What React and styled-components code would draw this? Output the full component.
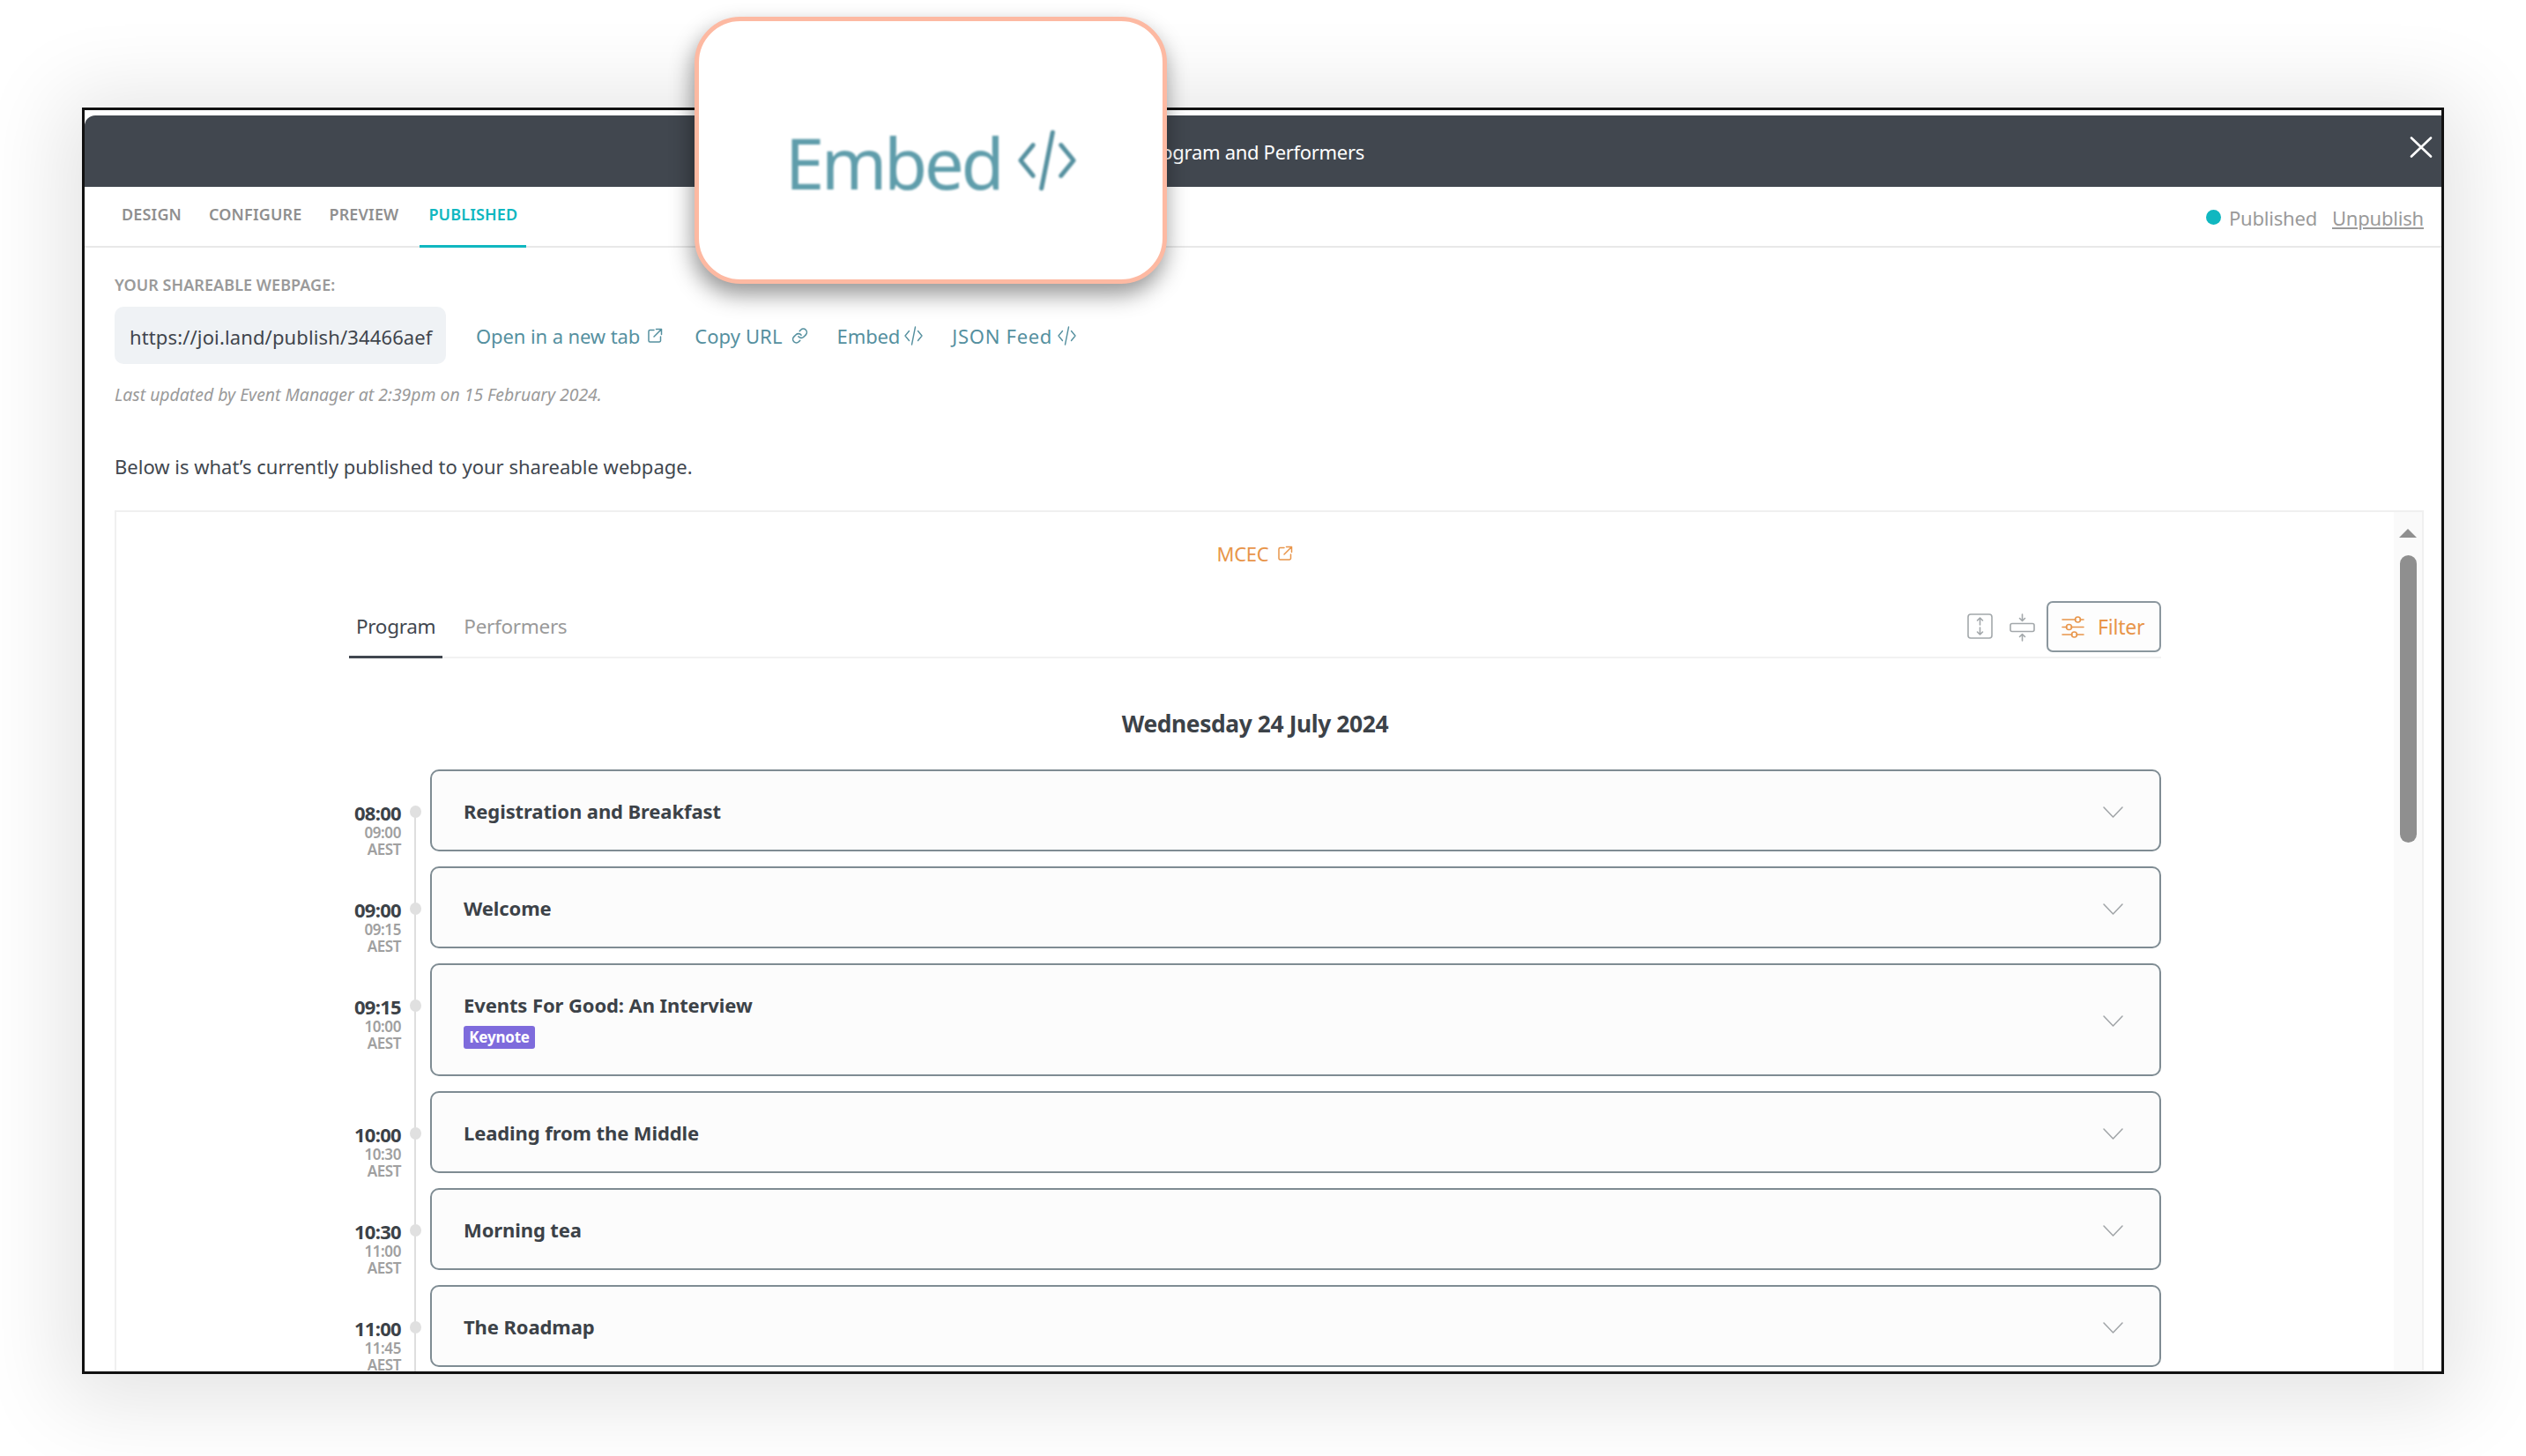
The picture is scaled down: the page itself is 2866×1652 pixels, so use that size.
import React from 'react'
import styled, { createGlobalStyle } from 'styled-components'

const FONT = '"Noto Sans", "Open Sans", sans-serif'
const TEAL = '#10b7c0'
const LINK = '#55909f'
const ORANGE = '#e8954a'

const Global = createGlobalStyle`
  html, body { margin: 0; padding: 0; background: #fff; }
  body { font-family: ${FONT}; width: 2866px; height: 1652px; overflow: hidden; }
`

const Page = styled.div`
  position: relative;
  padding: 122px 93px 0;
  height: 1652px;
  box-sizing: border-box;
`

const Frame = styled.div`
  height: 1437px;
  box-sizing: border-box;
  border: 3px solid #111;
  background: #fff;
  padding-top: 6px;
  overflow: hidden;
  box-shadow: 0 10px 90px 22px rgba(0, 0, 0, 0.11);
`

const Header = styled.div`
  height: 81px;
  background: #41474f;
  border-radius: 12px 0 0 0;
  position: relative;
  display: flex;
  align-items: center;
  justify-content: flex-end;
  padding-right: 1222px;
  color: #fff;
  font-size: 22px;
  letter-spacing: -0.3px;
`

const Close = styled.div`
  position: absolute;
  right: 10px;
  top: 24px;
  line-height: 0;
`

const TabBar = styled.div`
  height: 69px;
  box-sizing: border-box;
  border-bottom: 2px solid #e8e8e8;
  display: flex;
  align-items: stretch;
  padding: 0 20px 0 32px;
`

const TopTab = styled.div`
  padding: 0 10px 4px;
  margin-right: ${p => p.$gap}px;
  margin-bottom: -2px;
  display: flex;
  align-items: center;
  font-size: 18px;
  font-weight: 600;
  letter-spacing: 0.15px;
  color: ${p => (p.$active ? TEAL : '#8f8f8f')};
  border-bottom: 3px solid ${p => (p.$active ? TEAL : 'transparent')};
`

const Status = styled.div`
  margin-left: auto;
  display: flex;
  align-items: center;
  font-size: 22px;
  letter-spacing: -0.2px;
  color: #9a9a9a;
  padding-top: 2px;
`

const StatusDot = styled.span`
  width: 17px;
  height: 17px;
  border-radius: 50%;
  background: ${TEAL};
  margin-right: 9px;
`

const Unpublish = styled.span`
  margin-left: 17px;
  text-decoration: underline;
`

const Body = styled.div`
  padding: 30px 20px 0 34px;
`

const ShareLabel = styled.div`
  font-size: 18px;
  line-height: 24px;
  font-weight: 600;
  letter-spacing: 0.05px;
  color: #9a9a9a;
`

const ShareRow = styled.div`
  display: flex;
  align-items: center;
  margin-top: 13px;
`

const UrlBox = styled.div`
  width: 376px;
  height: 65px;
  box-sizing: border-box;
  background: #eff2f5;
  border-radius: 10px;
  padding: 2px 0 0 17px;
  display: flex;
  align-items: center;
  font-size: 22px;
  letter-spacing: 0.13px;
  color: #3f454c;
  white-space: nowrap;
`

const LinkItem = styled.div`
  display: flex;
  align-items: center;
  margin-left: ${p => p.$left}px;
  gap: ${p => p.$gap}px;
  color: ${LINK};
  font-size: 22px;
  letter-spacing: ${p => p.$spacing}px;
  line-height: 0;
  height: 30px;
  white-space: nowrap;
`

const Updated = styled.div`
  margin-top: 23px;
  font-size: 19.4px;
  line-height: 24px;
  font-style: italic;
  color: #9a9a9a;
`

const Intro = styled.div`
  margin-top: 54px;
  font-size: 22px;
  line-height: 30px;
  color: #41474f;
`

const Panel = styled.div`
  margin-top: 35px;
  height: 1000px;
  border: 2px solid #f0f0f0;
  display: flex;
`

const PanelMain = styled.div`
  flex: 1;
  padding: 31px 264px 0 264px;
`

const Track = styled.div`
  width: 32px;
  background: #fafafa;
  display: flex;
  flex-direction: column;
  align-items: center;
  padding-top: 19px;
`

const TrackArrow = styled.div`
  width: 0;
  height: 0;
  border-left: 10px solid transparent;
  border-right: 10px solid transparent;
  border-bottom: 10px solid #8f8f8f;
`

const Thumb = styled.div`
  width: 19px;
  height: 326px;
  margin-top: 20px;
  border-radius: 10px;
  background: #8f8f8f;
`

const Venue = styled.div`
  display: flex;
  justify-content: center;
  align-items: center;
  gap: 10px;
  color: ${ORANGE};
  font-size: 22px;
  letter-spacing: -0.3px;
  line-height: 32px;
`

const TabsRow = styled.div`
  margin-top: 38px;
  height: 65px;
  box-sizing: border-box;
  border-bottom: 2px solid #f2f2f2;
  display: flex;
  align-items: stretch;
`

const ProgramTab = styled.div`
  padding: 0 8px 6px;
  margin-right: 16px;
  margin-bottom: -2px;
  display: flex;
  align-items: center;
  font-size: 22.5px;
  letter-spacing: -0.3px;
  color: ${p => (p.$active ? '#41474f' : '#9a9a9a')};
  border-bottom: 3px solid ${p => (p.$active ? '#41474f' : 'transparent')};
`

const Tools = styled.div`
  margin-left: auto;
  display: flex;
  align-items: flex-start;
`

const ToolIcon = styled.div`
  line-height: 0;
  margin-top: 14px;
  margin-right: ${p => p.$right}px;
`

const FilterButton = styled.div`
  width: 130px;
  height: 58px;
  box-sizing: border-box;
  border: 2px solid #8b979e;
  border-radius: 7px;
  background: #fdfdfd;
  display: flex;
  align-items: center;
  padding-left: 15px;
  gap: 15px;
  color: ${ORANGE};
  font-size: 23px;
  letter-spacing: -0.2px;
`

const DateTitle = styled.div`
  margin-top: 56px;
  text-align: center;
  font-size: 26.4px;
  line-height: 36px;
  font-weight: 700;
  letter-spacing: -0.4px;
  color: #3c4248;
  margin-bottom: 34px;
`

const Row = styled.div`
  display: flex;
  align-items: stretch;
`

const TimeCol = styled.div`
  width: 59px;
  text-align: right;
  padding-top: 36px;
  flex: none;
`

const TimeMain = styled.div`
  font-size: 22px;
  line-height: 26px;
  font-weight: 700;
  letter-spacing: -0.7px;
  color: #3c4248;
`

const TimeSub = styled.div`
  font-size: 17px;
  line-height: 19px;
  font-weight: 600;
  letter-spacing: -0.4px;
  color: #a0a0a0;
`

const Rail = styled.div`
  width: 33px;
  flex: none;
  position: relative;
  &::before {
    content: '';
    position: absolute;
    left: 15px;
    width: 2px;
    top: ${p => (p.$first ? 48 : 0)}px;
    bottom: 0;
    background: #dedede;
  }
  &::after {
    content: '';
    position: absolute;
    left: 10px;
    top: 41px;
    width: 13px;
    height: 14px;
    border-radius: 50%;
    background: #e0e0e0;
  }
`

const CardSlot = styled.div`
  flex: 1;
  padding-bottom: 17px;
`

const Card = styled.div`
  height: ${p => (p.$tall ? 128 : 93)}px;
  box-sizing: border-box;
  border: 2px solid #7f8c93;
  border-radius: 10px;
  background: #fcfcfc;
  padding: 30px 41px 0 36px;
  display: flex;
  justify-content: space-between;
  align-items: flex-start;
`

const CardTitle = styled.div`
  font-size: 22px;
  line-height: 30px;
  font-weight: 700;
  letter-spacing: -0.1px;
  color: #3c4248;
`

const Tag = styled.div`
  display: inline-block;
  margin-top: 9px;
  width: 81px;
  height: 26px;
  text-align: center;
  border-radius: 3px;
  background: #7e6bdc;
  color: #fff;
  font-size: 17px;
  line-height: 25px;
  font-weight: 700;
  letter-spacing: -0.2px;
`

const Chevron = styled.div`
  line-height: 0;
  margin-top: ${p => (p.$tall ? 27 : 10)}px;
`

const Magnifier = styled.div`
  position: absolute;
  left: 788px;
  top: 19px;
  width: 536px;
  height: 303px;
  box-sizing: border-box;
  border: 5px solid #fdb9a2;
  border-radius: 52px;
  background: #fff;
  box-shadow: -2px 12px 26px rgba(0, 0, 0, 0.42);
  display: flex;
  align-items: center;
  justify-content: center;
  gap: 16px;
  padding: 26px 0 0 3px;
`

const MagnifierText = styled.div`
  font-size: 80px;
  line-height: 1;
  letter-spacing: -3.5px;
  color: #5f9dab;
  filter: blur(0.9px);
`

const MagnifierIcon = styled.div`
  line-height: 0;
  margin-top: -4px;
  filter: blur(0.9px);
`

const ExternalIcon = ({ size = 18, color = LINK }) => (
  <svg width={size} height={size} viewBox="0 0 18 18" fill="none" stroke={color} strokeWidth="1.5" strokeLinecap="round" strokeLinejoin="round">
    <path d="M8 2.5H3.5a1.5 1.5 0 0 0-1.5 1.5v10.5a1.5 1.5 0 0 0 1.5 1.5H14a1.5 1.5 0 0 0 1.5-1.5V10" />
    <path d="M10.5 1.5h6v6M16.5 1.5 8 10" />
  </svg>
)

const CodeIcon = ({ width = 21, height = 24, stroke = 1.4 }) => (
  <svg width={width} height={height} viewBox="0 0 21 24" fill="none" stroke={LINK} strokeWidth={stroke} strokeLinecap="round" strokeLinejoin="round">
    <path d="M5.5 6.5 1 12l4.500 5.500M15.500 6.500 20 12l-4.500 5.500M12.500 2 8.500 22" />
  </svg>
)

const ChainIcon = () => (
  <svg width="19" height="20" viewBox="0 0 24 24" fill="none" stroke={LINK} strokeWidth="2" strokeLinecap="round" strokeLinejoin="round">
    <path d="M10 13a5 5 0 0 0 7.540.54l3-3a5 5 0 0 0-7.070-7.070l-1.720 1.710" />
    <path d="M14 11a5 5 0 0 0-7.540-.54l-3 3a5 5 0 0 0 7.070 7.070l1.710-1.710" />
  </svg>
)

const ExpandIcon = () => (
  <svg width="29" height="29" viewBox="0 0 29 29" fill="none" stroke="#a3a8ab" strokeWidth="1.600" strokeLinecap="round" strokeLinejoin="round">
    <rect x="1" y="1" width="27" height="27" rx="3" />
    <path d="M14.500 5v8M11.500 8l3-3 3 3M14.500 16v8M11.500 21l3 3 3-3" />
  </svg>
)

const CollapseIcon = () => (
  <svg width="29" height="32" viewBox="0 0 29 32" fill="none" stroke="#a3a8ab" strokeWidth="1.600" strokeLinecap="round" strokeLinejoin="round">
    <rect x="1" y="11.500" width="27" height="9" rx="2" />
    <path d="M14.500 1v7M11.500 5.500l3 3 3-3M14.500 31v-7M11.500 26.500l3-3 3 3" />
  </svg>
)

const FilterIcon = () => (
  <svg width="26" height="27" viewBox="0 0 26 27" fill="none" stroke={ORANGE} strokeWidth="1.600" strokeLinecap="round">
    <path d="M1 5h15M21 5h4M1 13.500h5M11 13.500h14M1 22h11M17 22h8" />
    <circle cx="18.500" cy="5" r="3" />
    <circle cx="8.500" cy="13.500" r="3" />
    <circle cx="14.500" cy="22" r="3" />
  </svg>
)

const ChevronIcon = () => (
  <svg width="23" height="13" viewBox="0 0 23 13" fill="none" stroke="#a0a4a7" strokeWidth="1.500" strokeLinecap="round" strokeLinejoin="round">
    <path d="M1 1l10.500 11L22 1" />
  </svg>
)

const sessions = [
  { start: '08:00', end: '09:00', title: 'Registration and Breakfast' },
  { start: '09:00', end: '09:15', title: 'Welcome' },
  { start: '09:15', end: '10:00', title: 'Events For Good: An Interview', tag: 'Keynote' },
  { start: '10:00', end: '10:30', title: 'Leading from the Middle' },
  { start: '10:30', end: '11:00', title: 'Morning tea' },
  { start: '11:00', end: '11:45', title: 'The Roadmap' },
]

export default function App() {
  return (
    <Page>
      <Global />
      <Frame>
        <Header>
          Program and Performers
          <Close>
            <svg width="26" height="24" viewBox="0 0 26 24" fill="none" stroke="#fff" strokeWidth="2.600" strokeLinecap="round">
              <path d="M2 1.500 24 22.500M24 1.500 2 22.500" />
            </svg>
          </Close>
        </Header>
        <TabBar>
          <TopTab $gap={11}>DESIGN</TopTab>
          <TopTab $gap={11}>CONFIGURE</TopTab>
          <TopTab $gap={14}>PREVIEW</TopTab>
          <TopTab $active>PUBLISHED</TopTab>
          <Status>
            <StatusDot />
            Published
            <Unpublish>Unpublish</Unpublish>
          </Status>
        </TabBar>
        <Body>
          <ShareLabel>YOUR SHAREABLE WEBPAGE:</ShareLabel>
          <ShareRow>
            <UrlBox>https://joi.land/publish/34466aef</UrlBox>
            <LinkItem $left={34} $gap={8} $spacing={-0.1}>Open in a new tab <ExternalIcon /></LinkItem>
            <LinkItem $left={36} $gap={10} $spacing={0.1}>Copy URL <ChainIcon /></LinkItem>
            <LinkItem $left={33} $gap={5} $spacing={-0.1}>Embed <CodeIcon /></LinkItem>
            <LinkItem $left={33} $gap={6} $spacing={0.7}>JSON Feed <CodeIcon /></LinkItem>
          </ShareRow>
          <Updated>Last updated by Event Manager at 2:39pm on 15 February 2024.</Updated>
          <Intro>Below is what’s currently published to your shareable webpage.</Intro>
          <Panel>
            <PanelMain>
              <Venue>MCEC <ExternalIcon color={ORANGE} /></Venue>
              <TabsRow>
                <ProgramTab $active>Program</ProgramTab>
                <ProgramTab>Performers</ProgramTab>
                <Tools>
                  <ToolIcon $right={19}><ExpandIcon /></ToolIcon>
                  <ToolIcon $right={13}><CollapseIcon /></ToolIcon>
                  <FilterButton><FilterIcon />Filter</FilterButton>
                </Tools>
              </TabsRow>
              <DateTitle>Wednesday 24 July 2024</DateTitle>
              {sessions.map((s, i) => (
                <Row key={s.start}>
                  <TimeCol>
                    <TimeMain>{s.start}</TimeMain>
                    <TimeSub>{s.end}</TimeSub>
                    <TimeSub>AEST</TimeSub>
                  </TimeCol>
                  <Rail $first={i === 0} />
                  <CardSlot>
                    <Card $tall={!!s.tag}>
                      <div>
                        <CardTitle>{s.title}</CardTitle>
                        {s.tag && <Tag>{s.tag}</Tag>}
                      </div>
                      <Chevron $tall={!!s.tag}><ChevronIcon /></Chevron>
                    </Card>
                  </CardSlot>
                </Row>
              ))}
            </PanelMain>
            <Track>
              <TrackArrow />
              <Thumb />
            </Track>
          </Panel>
        </Body>
      </Frame>
      <Magnifier>
        <MagnifierText>Embed</MagnifierText>
        <MagnifierIcon><CodeIcon width={72} height={76} stroke={1.6} /></MagnifierIcon>
      </Magnifier>
    </Page>
  )
}
